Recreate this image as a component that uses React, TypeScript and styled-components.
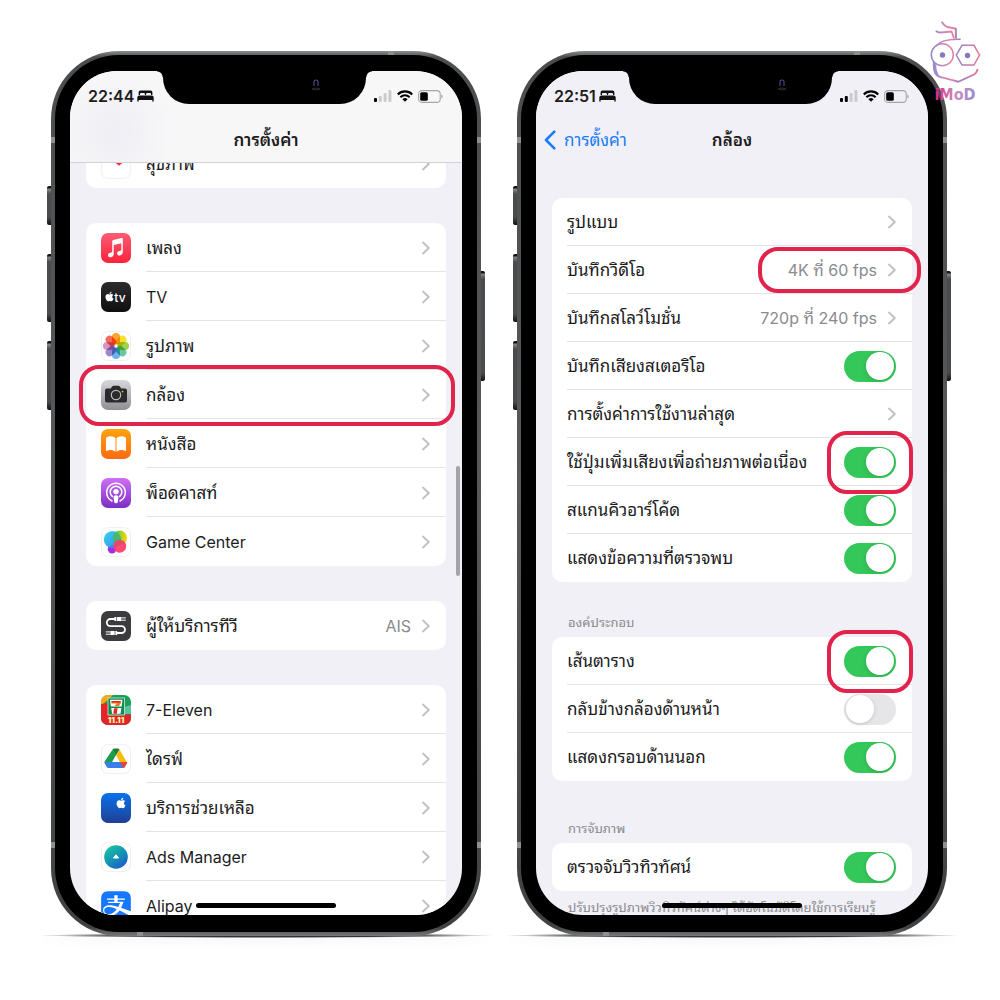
import React, { useId, useState } from "react";
import styled, { createGlobalStyle, css } from "styled-components";
import { FaAlipay, FaApple } from "react-icons/fa";

const sans = `Inter, "Noto Sans Thai Looped", "Noto Looped Thai", "Noto Sans Thai", Thonburi, Loma, Garuda, "Noto Sans", "Liberation Sans", sans-serif`;

const color = {
  ink: "#1c1c1e",
  muted: "#8a8a8f",
  faint: "#bfbfc4",
  line: "#e3e3e6",
  ground: "#f1f0f6",
  blue: "#1a7dfa",
  green: "#34c759",
  mark: "#e0244c",
};

const GlobalStyle = createGlobalStyle`
  *, *::before, *::after { box-sizing: border-box; }
  body { margin: 0; background: #fff; color: ${color.ink}; font-family: ${sans}; }
  button, input { font: inherit; color: inherit; }
`;

/* ---------- page and device ---------- */

const Page = styled.main`
  position: relative;
  display: flex;
  align-items: flex-start;
  gap: 36px;
  min-height: 100vh;
  padding: 51px 53px 60px 51px;
`;

const Device = styled.section`
  position: relative;
  flex: 1 1 0;
  min-width: 0;
  aspect-ratio: 430 / 885;
  display: flex;
  padding: 4px;
  border-radius: 68px;
  background: linear-gradient(#8b8d8e 0, #4b4d4e 6px, #57595a 50%, #3f4142 99%, #77797a 100%);

  &::after {
    content: "";
    position: absolute;
    z-index: -1;
    left: -12px;
    right: -12px;
    bottom: -2px;
    height: 5px;
    border-radius: 50%;
    background: radial-gradient(closest-side, #000c 60%, #0000);
    box-shadow: 0 4px 10px #0000000f;
  }
`;

const Bezel = styled.div`
  flex: 1;
  min-width: 0;
  display: flex;
  padding: 16px 15px 17px;
  border-radius: 64px;
  background: #000;
`;

const Screen = styled.div`
  position: relative;
  flex: 1;
  min-width: 0;
  display: flex;
  flex-direction: column;
  overflow: hidden;
  border-radius: 47px;
  background: ${color.ground};
`;

const SideKey = styled.i<{ $side: "left" | "right"; $top: number; $length: number }>`
  position: absolute;
  ${(p) => p.$side}: -4px;
  top: ${(p) => p.$top}px;
  width: 4px;
  height: ${(p) => p.$length}px;
  border-radius: ${(p) => (p.$side === "left" ? "2px 0 0 2px" : "0 2px 2px 0")};
  background: linear-gradient(#111 0, #111 2px, #888 3px, #4a4b4c 8px, #4a4b4c calc(100% - 8px), #111 100%);
`;

const Band = styled.i<{ $edge: "left" | "right" | "top" | "bottom"; $at: number }>`
  position: absolute;
  ${(p) => p.$edge}: 0;
  ${(p) =>
    p.$edge === "left" || p.$edge === "right"
      ? css`top: ${p.$at}px; width: 4px; height: 6px;`
      : css`left: ${p.$at}px; width: 6px; height: 4px;`}
  background: #8d8f90;
`;

const Notch = styled.div`
  position: absolute;
  z-index: 4;
  top: 0;
  left: 93px;
  right: 96px;
  height: 33px;
  border-radius: 0 0 26px 26px;
  background: #000;

  &::before, &::after {
    content: "";
    position: absolute;
    top: 0;
    width: 6px;
    height: 6px;
  }
  &::before { right: 100%; background: radial-gradient(circle at 0 100%, #0000 5px, #000 6px); }
  &::after { left: 100%; background: radial-gradient(circle at 100% 100%, #0000 5px, #000 6px); }
`;

const Lens = styled.svg`
  position: absolute;
  right: 44px;
  top: 6px;
`;

/* ---------- top bars ---------- */

const TopBar = styled.header<{ $frosted?: boolean }>`
  position: relative;
  z-index: 3;
  flex: none;
  height: 92px;
  border-bottom: 1px solid ${(p) => (p.$frosted ? "#d2d2d6" : "transparent")};
  background: ${(p) =>
    p.$frosted
      ? "radial-gradient(circle at 44px 62px, #efeef4 0, #efeef400 60px), #f7f7f8"
      : color.ground};
`;

const StatusBar = styled.div`
  display: flex;
  align-items: center;
  justify-content: space-between;
  height: 50px;
  padding: 0 19px 0 18px;
`;

const StatusGroup = styled.div<{ $tight?: boolean }>`
  display: flex;
  align-items: center;
  gap: ${(p) => (p.$tight ? 3 : 5)}px;
`;

const Clock = styled.time`
  font-size: 16px;
  font-weight: 600;
  line-height: 20px;
`;

const NavBar = styled.nav`
  display: grid;
  grid-template-columns: 1fr auto 1fr;
  align-items: center;
  height: 38px;
  padding: 0 8px;
`;

const NavTitle = styled.h1`
  grid-column: 2;
  margin: 0;
  font-size: 17px;
  font-weight: 600;
  line-height: 26px;
`;

const BackButton = styled.button`
  grid-column: 1;
  justify-self: start;
  display: flex;
  align-items: center;
  gap: 8px;
  padding: 0;
  border: 0;
  background: none;
  color: ${color.blue};
  font-size: 17px;
  line-height: 26px;
  cursor: pointer;
`;

/* ---------- grouped lists ---------- */

const List = styled.div<{ $scrolled?: boolean }>`
  flex: 1;
  min-height: 0;
  display: flex;
  flex-direction: column;
  padding: 0 16px;
  ${(p) =>
    p.$scrolled
      ? css`gap: 35px; margin-top: -24px;`
      : css`padding-top: 35px;`}
`;

const Card = styled.ul`
  flex: none;
  margin: 0;
  padding: 0;
  list-style: none;
  border-radius: 10px;
  background: #fff;
`;

const Item = styled.li<{ $tall?: boolean }>`
  position: relative;
  display: flex;
  height: ${(p) => (p.$tall ? 49 : 48)}px;
  padding-left: 15px;
`;

const rowBody = css`
  flex: 1;
  min-width: 0;
  display: flex;
  align-items: center;
  padding: 0 16px 0 0;
  border: 0;
  background: none;
  text-align: left;
  text-decoration: none;
  color: inherit;
  font-size: 16px;
  line-height: 24px;
`;

const RowLink = styled.a`
  ${rowBody}
  gap: 15px;
`;

const RowLabel = styled.label`
  ${rowBody}
`;

const RowText = styled.span<{ $divided?: boolean }>`
  flex: 1;
  min-width: 0;
  align-self: stretch;
  display: flex;
  align-items: center;
  justify-content: space-between;
  margin-right: -16px;
  padding-right: 16px;
  white-space: nowrap;
  box-shadow: ${(p) => (p.$divided ? `inset 0 -1px ${color.line}` : "none")};
`;

/* Thai letters look small beside Latin ones at the same size. */
const Name = styled.span`
  &:lang(th) { font-size: 17px; }
`;

const Trailing = styled.span`
  position: relative;
  display: flex;
  align-items: center;
  gap: 11px;
  color: ${color.muted};
`;

const GroupTitle = styled.h2<{ $spaced?: boolean }>`
  margin: 0;
  padding: ${(p) => (p.$spaced ? 37 : 30)}px 16px 5px;
  font-size: 13px;
  font-weight: 400;
  line-height: 20px;
  color: ${color.muted};
`;

const Footnote = styled.p`
  margin: 0;
  padding: 6px 16px;
  font-size: 13px;
  line-height: 20px;
  white-space: nowrap;
  color: ${color.muted};
`;

const Switch = styled.input`
  appearance: none;
  flex: none;
  display: flex;
  align-items: center;
  width: 52px;
  height: 31px;
  margin: 0;
  padding: 2px;
  border-radius: 16px;
  background: #e6e6e9;
  cursor: pointer;

  &::before {
    content: "";
    width: 28px;
    height: 28px;
    border-radius: 50%;
    background: #fff;
    box-shadow: 0 1px 4px #00000026;
  }
  &:checked { background: ${color.green}; }
  &:checked::before { margin-left: auto; }
`;

const rings = {
  row: "-5px -9px -7px -7px",
  value: "-11px -25px -11px -30px",
  toggle: "-16px -17px",
};

const Ring = styled.i<{ $around: keyof typeof rings }>`
  position: absolute;
  z-index: 2;
  inset: ${(p) => rings[p.$around]};
  border: 4px solid ${color.mark};
  border-radius: 20px;
  pointer-events: none;
`;

const HomeBar = styled.i`
  position: absolute;
  z-index: 3;
  left: 126px;
  right: 126px;
  bottom: 7px;
  height: 5px;
  border-radius: 3px;
  background: #000;
`;

const ScrollThumb = styled.i`
  position: absolute;
  right: 2px;
  top: 395px;
  width: 4px;
  height: 110px;
  border-radius: 2px;
  background: #a3a3a8;
`;

const Tile = styled.span<{ $fill: string; $outlined?: boolean }>`
  position: relative;
  flex: none;
  display: flex;
  align-items: center;
  justify-content: center;
  width: 30px;
  height: 30px;
  overflow: hidden;
  border-radius: 7px;
  background: ${(p) => p.$fill};
  box-shadow: ${(p) => (p.$outlined ? "inset 0 0 0 1px #f1f1f4" : "none")};
  color: #fff;
  isolation: isolate;
  > svg { flex: none; }
`;

/* ---------- glyphs ---------- */

const Chevron = () => (
  <svg width="8" height="14" viewBox="0 0 8 14" fill="none" stroke={color.faint} strokeWidth="1.8" strokeLinecap="round" strokeLinejoin="round" aria-hidden>
    <path d="M1 1.5 6.8 7 1 12.5" />
  </svg>
);

const BedGlyph = () => (
  <svg width="17" height="12" viewBox="0 0 17 12" fill="#111" aria-hidden>
    <path d="M1.600 5V2.200Q1.600.5 3.400.5h10.200q1.800 0 1.800 1.700V5H14V3.900q0-.9-.9-.9H10q-.9 0-.9.9V5H7.900V3.900Q7.900 3 7 3H3.900Q3 3 3 3.900V5z" />
    <path d="M.3 7.600Q.3 5.600 2.400 5.600h12.200q2.100 0 2.100 2v4h-1.400V10H1.700v1.600H.3z" />
  </svg>
);

const SignalGlyph = ({ bars }: { bars: number }) => (
  <svg width="18" height="12" viewBox="0 0 18 12" aria-hidden>
    {[4, 6, 9, 12].map((h, i) => (
      <rect key={h} x={i * 4.8} y={12 - h} width="3" height={h} rx="1" fill={i < bars ? "#000" : "#cbcbcf"} />
    ))}
  </svg>
);

const WifiGlyph = () => (
  <svg width="16" height="12" viewBox="0 0 16 12" fill="none" stroke="#000" strokeWidth="2.1" aria-hidden>
    <path d="M.8 4.4a10.2 10.2 0 0 1 14.4 0" />
    <path d="M3.4 7.2a6.5 6.5 0 0 1 9.2 0" />
    <path d="M8 11.8 5.4 9.2a3.7 3.7 0 0 1 5.2 0z" fill="#000" stroke="none" />
  </svg>
);

const BatteryGlyph = () => (
  <svg width="25" height="13" viewBox="0 0 25 13" aria-hidden>
    <rect x=".6" y=".6" width="21.6" height="11.8" rx="3.4" fill="none" stroke="#a5a5aa" strokeWidth="1.1" />
    <rect x="2.2" y="2.2" width="7.6" height="8.6" rx="1.6" fill="#000" />
    <path d="M23.4 4.4v4.2q1.4-.6 1.4-2.1t-1.4-2.1z" fill="#a5a5aa" />
  </svg>
);

const petals = ["#fba32c", "#f5e02a", "#a5d24a", "#66c9a4", "#6db2ec", "#9a86cf", "#d795c0", "#f4695a"];

const art = {
  health: (
    <Tile $fill="#fff" $outlined>
      <svg width="30" height="30" viewBox="0 0 30 30"><path d="M18 16.800 12.500 12a3.600 3.600 0 0 1 5.500-4.600A3.600 3.600 0 0 1 23.500 12z" fill="#fb2b3a" /></svg>
    </Tile>
  ),
  music: (
    <Tile $fill="linear-gradient(#fb5c74, #fa233b)">
      <svg width="30" height="30" viewBox="0 0 30 30" fill="#fff">
        <path d="M11.200 8.200q0-1 1-1.200l8.600-1.900q1-.2 1 .8v13.200c0 2-1.300 3.200-3.100 3.400-1.600.2-2.600-.8-2.600-2.100 0-1.400 1-2.100 2.400-2.400 1.300-.3 1.800-.5 1.800-1.500v-6.200l-7.600 1.700v9c0 2-1.300 3.100-3 3.300-1.700.2-2.700-.8-2.700-2.100 0-1.400 1-2.100 2.400-2.400 1.300-.3 1.800-.5 1.800-1.500z" />
      </svg>
    </Tile>
  ),
  tv: (
    <Tile $fill="linear-gradient(#2d2d2f, #0f0f10)">
      <svg width="30" height="30" viewBox="0 0 30 30" fill="#fff">
        <FaApple x="3" y="9" size={11} />
        <text x="13.300" y="19.500" fontFamily="Inter, sans-serif" fontSize="12" fontWeight="500">tv</text>
      </svg>
    </Tile>
  ),
  photos: (
    <Tile $fill="#fff" $outlined>
      <svg width="30" height="30" viewBox="0 0 30 30">
        {petals.map((fill, i) => (
          <rect key={fill} x="11" y="2" width="8" height="11.500" rx="4" fill={fill} style={{ mixBlendMode: "multiply" }} transform={`rotate(${i * 45} 15 15)`} />
        ))}
      </svg>
    </Tile>
  ),
  camera: (
    <Tile $fill="linear-gradient(#d8d8dc, #8e8e93)">
      <svg width="30" height="30" viewBox="0 0 30 30">
        <path d="M4 10.500Q4 8.500 6 8.500h3.700l1.500-2q.5-.7 1.400-.7h4.800q.9 0 1.400.7l1.500 2H24q2 0 2 2V20.500q0 2-2 2H6q-2 0-2-2z" fill="#2b2b2d" />
        <circle cx="15" cy="15" r="4.700" fill="none" stroke="#b9b9bd" strokeWidth="1.200" />
        <circle cx="21.500" cy="11.600" r=".9" fill="#f6c21b" />
      </svg>
    </Tile>
  ),
  books: (
    <Tile $fill="linear-gradient(#ffa30f, #fb6b12)">
      <svg width="30" height="30" viewBox="0 0 30 30" fill="#fff">
        <path d="M14.500 9.200C12.600 6.600 7.200 6.500 5 8.700v13.500c2.700-1.800 7-1.600 9.500.6zM15.500 9.200c1.900-2.600 7.300-2.700 9.500-.5v13.500c-2.700-1.800-7-1.600-9.500.6z" />
      </svg>
    </Tile>
  ),
  podcasts: (
    <Tile $fill="linear-gradient(#d06ff5, #7b2fc4)">
      <svg width="30" height="30" viewBox="0 0 30 30" fill="none" stroke="#fff" strokeWidth="1.500" strokeLinecap="round">
        <path d="M11 23a9.300 9.300 0 1 1 8 0" />
        <path d="M11.300 18.400a5.800 5.800 0 1 1 7.400 0" />
        <circle cx="15" cy="13.600" r="2.700" fill="#fff" stroke="none" />
        <path d="M12.500 19q0-1.800 2.500-1.800t2.500 1.800l-.7 5q-.2 1.200-1.800 1.200T13.200 24z" fill="#fff" stroke="none" />
      </svg>
    </Tile>
  ),
  games: (
    <Tile $fill="#fff" $outlined>
      <svg width="30" height="30" viewBox="0 0 30 30">
        <defs>
          <linearGradient id="gc-blue" x2="1" y2="1"><stop stopColor="#22d3e6" /><stop offset="1" stopColor="#2a7df5" /></linearGradient>
          <linearGradient id="gc-green" x2="1"><stop stopColor="#2fbf7c" /><stop offset=".55" stopColor="#9bd32c" /><stop offset="1" stopColor="#ffd60a" /></linearGradient>
          <linearGradient id="gc-red" x2="1" y2="1"><stop stopColor="#f0456f" /><stop offset="1" stopColor="#ff2f5f" /></linearGradient>
        </defs>
        <circle cx="11" cy="22.300" r="4.200" fill="#9b2fe8" />
        <circle cx="18.800" cy="10.800" r="7.300" fill="url(#gc-green)" />
        <circle cx="11.400" cy="12.500" r="8.600" fill="url(#gc-blue)" opacity=".92" />
        <path d="M13 6.400a7.300 7.300 0 0 0 5.500 11.300A8.600 8.600 0 0 0 17 6q-2-1-4 .4z" fill="#4fba5a" opacity=".85" />
        <circle cx="18.700" cy="19.200" r="6.500" fill="url(#gc-red)" opacity=".9" />
      </svg>
    </Tile>
  ),
  provider: (
    <Tile $fill="#3c3c3e">
      <svg width="30" height="30" viewBox="0 0 30 30" fill="none" stroke="#fff" strokeWidth="1.800">
        <path d="M14 8H9.400a3.600 3.600 0 0 0 0 7.200h11.200a3.400 3.400 0 0 1 0 6.800h-4.800" />
        <path d="M13.400 6h6.800v4h-6.800zM9.400 20h6.800v4H9.400z" fill="#fff" stroke="none" />
        <path d="M20.200 6.900h4.600M20.200 9.200h4.600M4.800 20.900h4.600M4.800 23.200h4.600" strokeWidth="1" />
        <path d="M15.600 5.500v5M14 19.500v5" stroke="#3c3c3e" strokeWidth=".7" />
      </svg>
    </Tile>
  ),
  seven: (
    <Tile $fill="#19a05a">
      <svg width="30" height="30" viewBox="0 0 30 30">
        <path d="M0 0h12L0 11z" fill="#f7a81b" />
        <path d="M0 9l7-1v12H0z" fill="#e1252b" />
        <path d="M23 12l7-2v9h-7z" fill="#58c3a0" />
        <rect y="19.500" width="30" height="10.500" fill="#e1252b" />
        <rect x="7" y="3" width="16.500" height="17" fill="#0d8a4c" stroke="#cfeadb" strokeWidth=".8" />
        <path d="M9 4.800h12.500l-.8 6.700H9.800zM10.200 13h10.200l-.9 5.800h-8.400z" fill="#fff" />
        <path d="M10.500 6h9.200v2.600q-.8 1-1.600 2.300h-4.400q.8-1.200 2.200-2.300h-5.400z" fill="#ee7a20" />
        <path d="M10.500 6h9.200v1.400h-9.200z" fill="#e1252b" />
        <path d="M13.200 13.200h3.600q-.9 2.300-.9 5.600h-3.500q0-3.200.8-5.600z" fill="#e1252b" />
        <text x="15" y="27.800" textAnchor="middle" fontFamily="Inter, sans-serif" fontSize="8" fontWeight="900" fill="#fff3a8">11.11</text>
      </svg>
    </Tile>
  ),
  drive: (
    <Tile $fill="#fff" $outlined>
      <svg width="30" height="30" viewBox="0 0 30 30">
        <path d="M11.600 5.500 15 11.200 7.700 24q-1.300-.2-1.900-1.200L3.800 19.300q-.6-1 0-2z" fill="#1e9e4a" />
        <path d="M11.600 5.500q.6-.9 1.800-.9h3.400q1.100 0 1.700.9L15 11.600z" fill="#14803a" />
        <path d="M18.500 5.500 25.800 18h-6.900L15 11.200z" fill="#fcbd10" />
        <path d="M3.600 18h22.600q0 .8-.4 1.500l-1.900 3.200q-.7 1.300-2 1.300H8.100q-1.500 0-2.200-1.300L4 19.500q-.4-.7-.4-1.500z" fill="#3b7de9" />
        <path d="M18.900 18h7.300q0 .8-.4 1.500l-1.900 3.200q-.5.9-1.500 1.200z" fill="#ea4335" />
        <path d="M15 11.800 18.500 18h-7z" fill="#fff" />
      </svg>
    </Tile>
  ),
  support: (
    <Tile $fill="linear-gradient(#0a72ec, #1f3f94)">
      <svg width="30" height="30" viewBox="0 0 30 30" fill="#fff"><FaApple x="14" y="4" size={12} /></svg>
    </Tile>
  ),
  ads: (
    <Tile $fill="#fff" $outlined>
      <svg width="30" height="30" viewBox="0 0 30 30">
        <defs><linearGradient id="ads" x1=".2" x2=".9" y2="1"><stop stopColor="#17c3a0" /><stop offset=".5" stopColor="#1592b4" /><stop offset="1" stopColor="#2050d0" /></linearGradient></defs>
        <circle cx="15" cy="15" r="11.800" fill="url(#ads)" />
        <path d="M12.400 16 15 12.800 17.600 16z" fill="#fff" stroke="#fff" strokeLinejoin="round" />
      </svg>
    </Tile>
  ),
  alipay: (
    <Tile $fill="#fff">
      <FaAlipay size={34} color="#1677ff" />
    </Tile>
  ),
};

/* ---------- shared parts ---------- */

const Hardware = () => (
  <>
    <SideKey $side="left" $top={135} $length={39} />
    <SideKey $side="left" $top={203} $length={68} />
    <SideKey $side="left" $top={290} $length={69} />
    <SideKey $side="right" $top={220} $length={110} />
    <Band $edge="left" $at={86} />
    <Band $edge="right" $at={86} />
    <Band $edge="left" $at={791} />
    <Band $edge="right" $at={791} />
    <Band $edge="top" $at={337} />
    <Band $edge="bottom" $at={86} />
  </>
);

const Phone = ({ label, children }: { label: string; children: React.ReactNode }) => (
  <Device aria-label={label}>
    <Hardware />
    <Bezel>
      <Screen>
        <Notch>
          <Lens width="12" height="16" viewBox="0 0 12 16" fill="none" aria-hidden>
            <path d="M4 9V4.500q0-1.500 2-1.500t2 1.500V9" stroke="#5a4890" strokeWidth="1.100" />
            <path d="M2 12q4-2 8 0-4 2-8 0z" stroke="#2c2c2e" />
          </Lens>
        </Notch>
        {children}
        <HomeBar />
      </Screen>
    </Bezel>
  </Device>
);

const Status = ({ time, bars }: { time: string; bars: number }) => (
  <StatusBar>
    <StatusGroup $tight>
      <Clock>{time}</Clock>
      <BedGlyph />
    </StatusGroup>
    <StatusGroup>
      <SignalGlyph bars={bars} />
      <WifiGlyph />
      <BatteryGlyph />
    </StatusGroup>
  </StatusBar>
);

const RowName = ({ children }: { children: string }) => (
  <Name lang={/[\u0e00-\u0e7f]/.test(children) ? "th" : "en"}>{children}</Name>
);

type AppEntry = { icon: keyof typeof art; name: string; value?: string; marked?: boolean };

const appGroups: AppEntry[][] = [
  [{ icon: "health", name: "สุขภาพ" }],
  [
    { icon: "music", name: "เพลง" },
    { icon: "tv", name: "TV" },
    { icon: "photos", name: "รูปภาพ" },
    { icon: "camera", name: "กล้อง", marked: true },
    { icon: "books", name: "หนังสือ" },
    { icon: "podcasts", name: "พ็อดคาสท์" },
    { icon: "games", name: "Game Center" },
  ],
  [{ icon: "provider", name: "ผู้ให้บริการทีวี", value: "AIS" }],
  [
    { icon: "seven", name: "7-Eleven" },
    { icon: "drive", name: "ไดรฟ์" },
    { icon: "support", name: "บริการช่วยเหลือ" },
    { icon: "ads", name: "Ads Manager" },
    { icon: "alipay", name: "Alipay" },
  ],
];

const AppRow = ({ entry, last }: { entry: AppEntry; last: boolean }) => (
  <Item $tall>
    <RowLink href="#">
      {art[entry.icon]}
      <RowText $divided={!last}>
        <RowName>{entry.name}</RowName>
        <Trailing>
          {entry.value}
          <Chevron />
        </Trailing>
      </RowText>
    </RowLink>
    {entry.marked && <Ring $around="row" />}
  </Item>
);

type CameraEntry = { name: string; value?: string; on?: boolean; marked?: boolean };

const general: CameraEntry[] = [
  { name: "รูปแบบ" },
  { name: "บันทึกวิดีโอ", value: "4K ที่ 60 fps", marked: true },
  { name: "บันทึกสโลว์โมชั่น", value: "720p ที่ 240 fps" },
  { name: "บันทึกเสียงสเตอริโอ", on: true },
  { name: "การตั้งค่าการใช้งานล่าสุด" },
  { name: "ใช้ปุ่มเพิ่มเสียงเพื่อถ่ายภาพต่อเนื่อง", on: true, marked: true },
  { name: "สแกนคิวอาร์โค้ด", on: true },
  { name: "แสดงข้อความที่ตรวจพบ", on: true },
];

const composition: CameraEntry[] = [
  { name: "เส้นตาราง", on: true, marked: true },
  { name: "กลับข้างกล้องด้านหน้า", on: false },
  { name: "แสดงกรอบด้านนอก", on: true },
];

const capture: CameraEntry[] = [{ name: "ตรวจจับวิวทิวทัศน์", on: true }];

const SwitchRow = ({ entry, last }: { entry: CameraEntry; last: boolean }) => {
  const id = useId();
  const [on, setOn] = useState(!!entry.on);
  return (
    <Item>
      <RowLabel htmlFor={id}>
        <RowText $divided={!last}>
          <RowName>{entry.name}</RowName>
          <Trailing>
            <Switch id={id} type="checkbox" role="switch" checked={on} onChange={() => setOn(!on)} />
            {entry.marked && <Ring $around="toggle" />}
          </Trailing>
        </RowText>
      </RowLabel>
    </Item>
  );
};

const LinkRow = ({ entry, last }: { entry: CameraEntry; last: boolean }) => (
  <Item>
    <RowLink href="#">
      <RowText $divided={!last}>
        <RowName>{entry.name}</RowName>
        <Trailing>
          {entry.value}
          <Chevron />
          {entry.marked && <Ring $around="value" />}
        </Trailing>
      </RowText>
    </RowLink>
  </Item>
);

const CameraGroup = ({ entries }: { entries: CameraEntry[] }) => (
  <Card>
    {entries.map((entry, i) => {
      const Row = entry.on === undefined ? LinkRow : SwitchRow;
      return <Row key={entry.name} entry={entry} last={i === entries.length - 1} />;
    })}
  </Card>
);

/* ---------- watermark ---------- */

const Watermark = styled.svg`
  position: absolute;
  z-index: 5;
  top: 18px;
  right: 18px;
`;

const ImodLogo = () => (
  <Watermark width="54" height="86" viewBox="0 0 54 86" fill="none" role="img" aria-label="iMoD">
    <defs>
      <linearGradient id="wm" gradientUnits="userSpaceOnUse" x1="3" y1="0" x2="52" y2="0"><stop stopColor="#8d86c9" /><stop offset=".25" stopColor="#c98abc" /><stop offset=".42" stopColor="#ec7f9f" /><stop offset=".55" stopColor="#9585c6" /><stop offset="1" stopColor="#ee7296" /></linearGradient>
      <linearGradient id="wt" gradientUnits="userSpaceOnUse" x1="6" y1="0" x2="48" y2="0"><stop stopColor="#e01c84" /><stop offset=".5" stopColor="#c98fbd" /><stop offset="1" stopColor="#9a8ad0" /></linearGradient>
    </defs>
    <g stroke="url(#wm)" strokeWidth="1.500">
      <path d="M13.700 3.700Q17 9 21 9.200l6.800 1.600L28 20.500" strokeWidth="2" />
      <path d="M8 12.700q1 2 5 1.800l10.500-1 2.600 7" strokeWidth="1.800" />
      <path d="M8 28q6-7.500 24.700-6.700" strokeWidth="1.600" />
      <circle cx="14.300" cy="36.700" r="11" />
      <path d="M34 27.300h12l5.500 9.700L46 47H34l-5.700-10z" />
      <path d="M6 44q-1.500 14 8 15.500L30.300 63.700 46 56.500q3-2 3.700-5.500" strokeWidth="1.800" />
    </g>
    <path d="M4.800 43.500Q4 54 12 59.500q-4-6-3.700-12.500z" fill="#a08acb" />
    <circle cx="14.500" cy="37" r="2.700" fill="#8578bf" />
    <circle cx="39.500" cy="37.500" r="2.700" fill="#8578bf" />
    <text x="27" y="82" textAnchor="middle" fontFamily='"DejaVu Sans Condensed", "DejaVu Sans", sans-serif' fontSize="16" fontWeight="700" fill="url(#wt)">iMoD</text>
  </Watermark>
);

export default function App() {
  return (
    <>
      <GlobalStyle />
      <Page>
        <Phone label="การตั้งค่า">
          <TopBar $frosted>
            <Status time="22:44" bars={1} />
            <NavBar>
              <NavTitle>การตั้งค่า</NavTitle>
            </NavBar>
          </TopBar>
          <List $scrolled>
            {appGroups.map((group) => (
              <Card key={group[0].name}>
                {group.map((entry, i) => (
                  <AppRow key={entry.name} entry={entry} last={i === group.length - 1} />
                ))}
              </Card>
            ))}
          </List>
          <ScrollThumb />
        </Phone>

        <Phone label="กล้อง">
          <TopBar>
            <Status time="22:51" bars={2} />
            <NavBar>
              <BackButton type="button">
                <svg width="12" height="20" viewBox="0 0 12 20" fill="none" stroke="currentColor" strokeWidth="2.600" strokeLinecap="round" strokeLinejoin="round" aria-hidden>
                  <path d="M10.300 1.700 2 10l8.300 8.300" />
                </svg>
                การตั้งค่า
              </BackButton>
              <NavTitle>กล้อง</NavTitle>
            </NavBar>
          </TopBar>
          <List>
            <CameraGroup entries={general} />
            <GroupTitle>องค์ประกอบ</GroupTitle>
            <CameraGroup entries={composition} />
            <GroupTitle $spaced>การจับภาพ</GroupTitle>
            <CameraGroup entries={capture} />
            <Footnote>ปรับปรุงรูปภาพวิวทิวทัศน์ต่างๆ ได้อัตโนมัติโดยใช้การเรียนรู้</Footnote>
          </List>
        </Phone>
        <ImodLogo />
      </Page>
    </>
  );
}
